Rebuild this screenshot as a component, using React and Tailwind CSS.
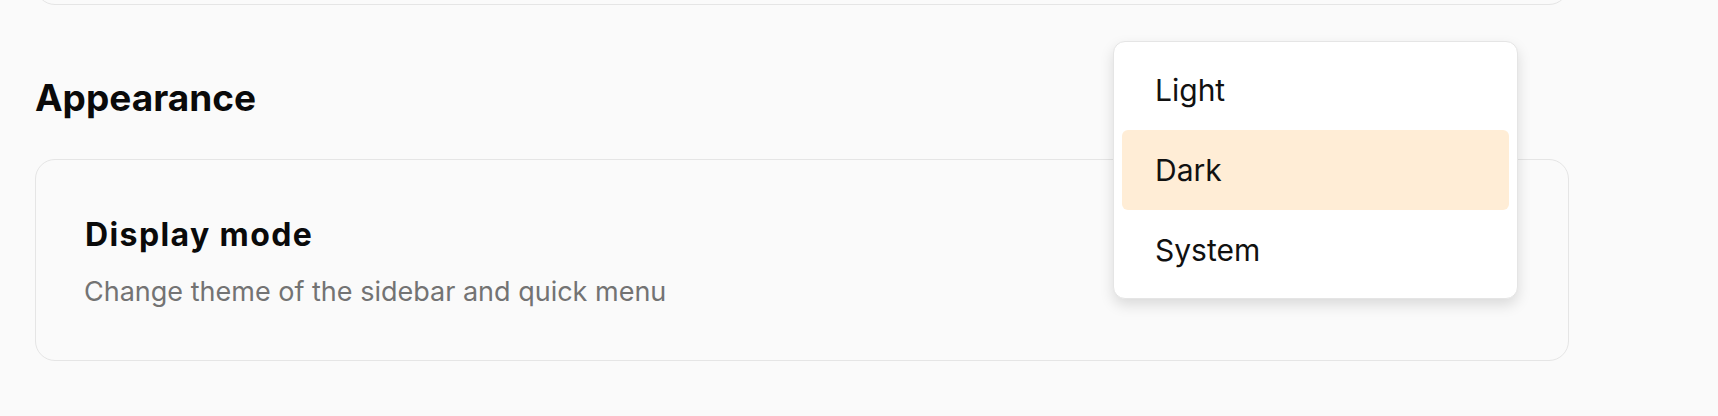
import React, { useState } from "react";

const options = ["Light", "Dark", "System"];

const ThemeMenu = ({ value, onChange }) => {
  return (
    <div className="absolute right-[50px] top-[-119px] w-[405px] rounded-[12px] border border-[#e5e5e5] bg-white p-[8px] shadow-[0_6px_14px_rgba(0,0,0,0.13)]">
      {options.map((opt) => (
        <div
          key={opt}
          onClick={() => onChange(opt)}
          className={`flex h-[80px] cursor-pointer items-center rounded-[6px] pl-[33px] text-[30px] text-[#111111] ${
            value === opt ? "bg-[#ffedd6]" : ""
          }`}
        >
          {opt}
        </div>
      ))}
    </div>
  );
};

const App = () => {
  const [mode, setMode] = useState("Dark");

  return (
    <div className="h-[416px] overflow-hidden bg-[#fafafa] font-['Inter',sans-serif]">
      <div className="w-[1569px] pl-[35px]">
        {/* previous section card, only its bottom edge shows */}
        <div className="-mt-[40px] h-[45px] rounded-[20px] border border-[#e5e5e5]" />

        <h2 className="mt-[71px] text-[37px] font-bold leading-[44px] text-[#0a0a0a]">
          Appearance
        </h2>

        <div className="relative mt-[39px] rounded-[20px] border border-[#e5e5e5] bg-[#fafafa] pb-[50px] pl-[48px] pr-[50px] pt-[57px]">
          <p className="ml-[1px] text-[32px] font-bold leading-[36px] tracking-[1.4px] text-[#0a0a0a]">
            Display mode
          </p>
          <p className="mt-[21px] text-[27px] leading-[36px] text-[#737373]">
            Change theme of the sidebar and quick menu
          </p>

          <ThemeMenu value={mode} onChange={setMode} />
        </div>
      </div>
    </div>
  );
};

export default App;
